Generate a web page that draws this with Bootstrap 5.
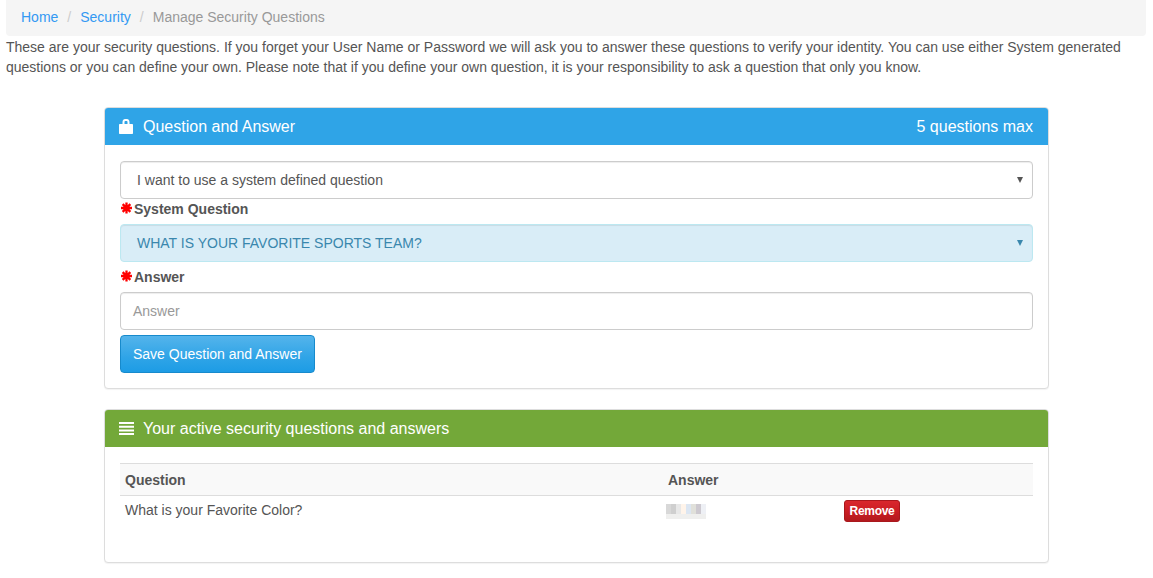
<!DOCTYPE html>
<html lang="en"><head><meta charset="utf-8">
<link href="https://cdn.jsdelivr.net/npm/bootstrap@5.3.0/dist/css/bootstrap.min.css" rel="stylesheet">
<style>
html,body{overflow:hidden}
body{font-family:"Liberation Sans",Arial,sans-serif;font-size:14px;line-height:20px;color:#555;background:#fff}
.crumbs{background:#f5f5f5;margin:0 7px 0 6px;height:36px;padding:7px 15px;border-radius:0 0 4px 4px;font-size:14px;list-style:none;display:flex}
.crumbs a{color:#3399f3;text-decoration:none}
.crumbs .sep{color:#ccc;padding:0 9px}
.crumbs .cur{color:#999}
.intro{margin:0 6px;font-size:14px;line-height:20px;height:71px;padding-top:1px;color:#555}
.pane{width:945px;margin:0 0 20px 104px;border:1px solid #ddd;border-radius:4px;box-shadow:0 1px 1px rgba(0,0,0,.05);background:#fff}
.pane-head{height:37px;color:#fff;font-size:16px;display:flex;align-items:center;padding:0 15px 0 14px;border-radius:3px 3px 0 0}
.pane-head svg{flex:none}
.icon-bag{margin-right:10px}
.icon-bars{margin-right:9px}
.hd-blue{background:#2fa4e7}
.hd-green{background:#73a839}
.pane-body{padding:16px 15px 15px}
.fld{width:100%;height:38px;border:1px solid #ccc;border-radius:4px;padding:0 9px 0 16px;font-size:14px;color:#555;background:#fff;display:flex;align-items:center;justify-content:space-between;box-shadow:inset 0 1px 1px rgba(0,0,0,.075)}
.fld-caret{width:0;height:0;border-left:3px solid transparent;border-right:3px solid transparent;border-top:6px solid #555}
.fld-info{background:#d9edf7;border-color:#bce8f1;color:#3a87ad}
.fld-info .fld-caret{border-top-color:#3a87ad}
.lbl{font-weight:700;height:25px;display:flex;align-items:flex-start;color:#555}
.lbl-second{margin-top:5px}
.lbl svg{margin:3px 2px 0 1px;flex:none}
.txt{padding:0 12px;color:#999}
.gobtn{background:linear-gradient(#54b4eb,#2fa4e7 60%,#1d9ce5);border:1px solid #178acc;color:#fff;height:38px;padding:0 12px;border-radius:4px;font-size:14px;margin-top:5px;display:inline-flex;align-items:center}
.qa{width:100%;border-collapse:collapse}
.qa th{background:#f9f9f9;border-top:1px solid #ddd;border-bottom:1px solid #ddd;height:32px;padding:0 5px;font-weight:700;text-align:left}
.qa td{padding:4px 5px 5px;height:31px;vertical-align:top}
.blur{display:block;margin:4px 0 0 -2px}
.rm{background:linear-gradient(#d9272d,#c71c22 60%,#b2191e);color:#fff;border:1px solid #a9181d;font-size:12px;font-weight:700;letter-spacing:-.3px;border-radius:3px;width:56px;text-align:center;height:22px;line-height:20px;display:block}
.tail{height:20px}
</style></head><body>
<ol class="crumbs mb-0"><li><a href="#">Home</a></li><li class="sep">/</li><li><a href="#">Security</a></li><li class="sep">/</li><li class="cur">Manage Security Questions</li></ol>
<p class="intro">These are your security questions. If you forget your User Name or Password we will ask you to answer these questions to verify your identity. You can use either System generated questions or you can define your own. Please note that if you define your own question, it is your responsibility to ask a question that only you know.</p>
<div class="pane">
<div class="pane-head hd-blue justify-content-between"><span class="d-flex align-items-center"><svg class="icon-bag" width="14" height="15" viewBox="0 0 14 15"><path fill="#fff" fill-rule="evenodd" d="M1 5h2.500V3C3.500 1 4.800 0 6 0h2c1.200 0 2.500 1 2.500 3v2H13c.6 0 1 .4 1 1v8c0 .6-.4 1-1 1H1c-.6 0-1-.4-1-1V6c0-.6.4-1 1-1zm4.500-2v2h3V3c0-.7-.3-1-.8-1H6.300c-.5 0-.8.3-.8 1z"/></svg><span>Question and Answer</span></span><span>5 questions max</span></div>
<div class="pane-body">
<div class="fld"><span>I want to use a system defined question</span><span class="fld-caret"></span></div>
<div class="lbl"><svg width="11" height="12" viewBox="0 0 12 12"><path stroke="#f00" stroke-width="2.500" d="M6 0v12M0 6h12M1.800 1.800l8.400 8.400M10.200 1.800l-8.400 8.400"/></svg>System Question</div>
<div class="fld fld-info"><span>WHAT IS YOUR FAVORITE SPORTS TEAM?</span><span class="fld-caret"></span></div>
<div class="lbl lbl-second"><svg width="11" height="12" viewBox="0 0 12 12"><path stroke="#f00" stroke-width="2.500" d="M6 0v12M0 6h12M1.800 1.800l8.400 8.400M10.200 1.800l-8.400 8.400"/></svg>Answer</div>
<div class="fld txt">Answer</div>
<div class="gobtn">Save Question and Answer</div>
</div></div>
<div class="pane">
<div class="pane-head hd-green"><svg class="icon-bars" width="15" height="13" viewBox="0 0 15 13"><path fill="#fff" d="M0 0h15v2H0zM0 3.700h15v2H0zM0 7.400h15v2H0zM0 11h15v2H0z"/></svg><span>Your active security questions and answers</span></div>
<div class="pane-body">
<table class="qa"><thead><tr><th style="width:543px">Question</th><th style="width:176px">Answer</th><th></th></tr></thead>
<tbody><tr><td>What is your Favorite Color?</td><td><svg class="blur" width="40" height="15" viewBox="0 0 8 3" shape-rendering="crispEdges"><path fill="#d8d8d8" d="M0 0h1v2H0z"/><path fill="#cfcfcf" d="M1 0h1v2H1z"/><path fill="#e8e8e8" d="M2 0h1v2H2z"/><path fill="#fff4ea" d="M3 0h1v2H3z"/><path fill="#dce6f2" d="M4 0h1v2H4z"/><path fill="#e0e0da" d="M5 0h1v2H5z"/><path fill="#cdc9d0" d="M6 0h1v2H6z"/><path fill="#eef0f5" d="M7 0h1v2H7z"/><path fill="#efefee" d="M0 2h8v1H0z"/></svg></td><td><span class="rm">Remove</span></td></tr></tbody></table>
<div class="tail"></div>
</div></div>
</body></html>
